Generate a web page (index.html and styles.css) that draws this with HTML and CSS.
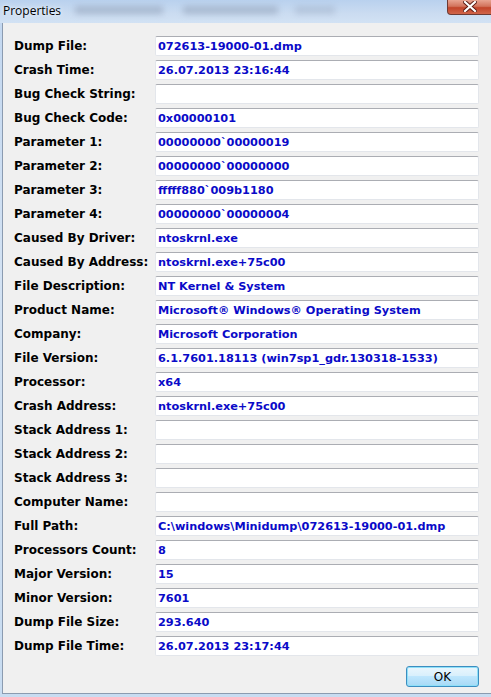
FILE: index.html
```html
<!DOCTYPE html>
<html lang="en">
<head>
    <meta charset="UTF-8">
    <title>Properties</title>
    <link rel="stylesheet" href="styles.css">
</head>
<body>
    <div class="window">
        <div class="titlebar">
            <span class="title">Properties</span>
            <div class="ghost ghost-a"></div>
            <div class="ghost ghost-b"></div>
            <div class="ghost ghost-c"></div>
            <div class="close-btn">
                <svg width="14" height="11" viewBox="0 0 14 11">
                    <path d="M2 1 L12 10 M12 1 L2 10" stroke="#5a1a12" stroke-width="4" stroke-linecap="square"/>
                    <path d="M2 1 L12 10 M12 1 L2 10" stroke="#fff" stroke-width="2.2" stroke-linecap="square"/>
                </svg>
            </div>
        </div>

        <div class="client">
            <div class="props">
                <label>Dump File:</label><div class="field">072613-19000-01.dmp</div>
                <label>Crash Time:</label><div class="field">26.07.2013 23:16:44</div>
                <label>Bug Check String:</label><div class="field"></div>
                <label>Bug Check Code:</label><div class="field">0x00000101</div>
                <label>Parameter 1:</label><div class="field">00000000`00000019</div>
                <label>Parameter 2:</label><div class="field">00000000`00000000</div>
                <label>Parameter 3:</label><div class="field">fffff880`009b1180</div>
                <label>Parameter 4:</label><div class="field">00000000`00000004</div>
                <label>Caused By Driver:</label><div class="field">ntoskrnl.exe</div>
                <label>Caused By Address:</label><div class="field">ntoskrnl.exe+75c00</div>
                <label>File Description:</label><div class="field">NT Kernel &amp; System</div>
                <label>Product Name:</label><div class="field">Microsoft® Windows® Operating System</div>
                <label>Company:</label><div class="field">Microsoft Corporation</div>
                <label>File Version:</label><div class="field">6.1.7601.18113 (win7sp1_gdr.130318-1533)</div>
                <label>Processor:</label><div class="field">x64</div>
                <label>Crash Address:</label><div class="field">ntoskrnl.exe+75c00</div>
                <label>Stack Address 1:</label><div class="field"></div>
                <label>Stack Address 2:</label><div class="field"></div>
                <label>Stack Address 3:</label><div class="field"></div>
                <label>Computer Name:</label><div class="field"></div>
                <label>Full Path:</label><div class="field">C:\windows\Minidump\072613-19000-01.dmp</div>
                <label>Processors Count:</label><div class="field">8</div>
                <label>Major Version:</label><div class="field">15</div>
                <label>Minor Version:</label><div class="field">7601</div>
                <label>Dump File Size:</label><div class="field">293.640</div>
                <label>Dump File Time:</label><div class="field">26.07.2013 23:17:44</div>
            </div>

            <div class="buttons">
                <button class="ok-btn">OK</button>
            </div>
        </div>
    </div>
</body>
</html>
```

FILE: styles.css
```css
* {
    margin: 0;
    padding: 0;
    box-sizing: border-box;
}

html, body {
    width: 491px;
    height: 697px;
    overflow: hidden;
}

body {
    background: #c9dbef;
}

.window {
    width: 500px;
    height: 697px;
    background: linear-gradient(180deg, #c2d7f0 0%, #d3e2f3 40%, #c8dcf1 100%);
    display: flex;
    flex-direction: column;
}

/* caption */
.titlebar {
    position: relative;
    height: 23px;
    flex: none;
    background: linear-gradient(180deg, #b9d1ee 0%, #cbdcf1 60%, #d2e2f4 100%);
}

.title {
    position: relative;
    z-index: 2;
    display: block;
    padding: 2px 0 0 3px;
    font-family: "Open Sans", "Noto Sans", sans-serif;
    font-size: 12px;
    color: #000;
    text-shadow: 0 0 6px #e8f1fb, 0 0 3px #e8f1fb;
}

.ghost {
    position: absolute;
    top: 6px;
    height: 8px;
    background: #9aabc2;
    filter: blur(3px);
    opacity: 0.7;
}

.ghost-a { left: 75px;  width: 88px; }
.ghost-b { left: 183px; width: 95px; }
.ghost-c { left: 295px; width: 40px; opacity: 0.45; }

.close-btn {
    position: absolute;
    top: 0;
    left: 447px;
    width: 46px;
    height: 15px;
    border: 1px solid #6d3a33;
    border-top: none;
    border-radius: 0 0 0 4px;
    background: linear-gradient(180deg, #e8a492 0%, #d2735c 45%, #c2442a 55%, #d0654a 100%);
    display: flex;
    align-items: flex-start;
    justify-content: center;
    padding: 1px 0 0 0;
}

/* dialog body */
.client {
    flex: none;
    height: 671px;
    margin-left: 2px;
    border-left: 1px solid #8b9bb0;
    border-bottom: 1px solid #8b9bb0;
    background: #f0f0f0;
    padding: 13px 0 0 11px;
}

.props {
    display: grid;
    grid-template-columns: 141px 324px;
    grid-auto-rows: 20px;
    row-gap: 4px;
}

.props label {
    font-family: "DejaVu Sans", sans-serif;
    font-weight: bold;
    font-size: 12px;
    color: #000;
    line-height: 21px;
    white-space: nowrap;
}

.field {
    background: #fff;
    border: 1px solid #e3e6eb;
    border-top-color: #abadb3;
    border-radius: 2px;
    padding-left: 2px;
    font-family: "DejaVu Sans", sans-serif;
    font-weight: bold;
    font-size: 11.3px;
    line-height: 19px;
    color: #0a0ac8;
    white-space: nowrap;
    overflow: hidden;
}

.buttons {
    display: flex;
    justify-content: flex-end;
    width: 465px;
    margin-top: 10px;
}

.ok-btn {
    width: 73px;
    height: 21px;
    border: 1px solid #3c8dc0;
    border-radius: 3px;
    background: linear-gradient(180deg, #eaf6fd 0%, #d9f0fc 45%, #bee6fd 50%, #a7d9f5 100%);
    box-shadow: inset 0 0 0 1px #8fe0f8;
    font-family: "DejaVu Sans", sans-serif;
    font-size: 12px;
    color: #000;
}
```
